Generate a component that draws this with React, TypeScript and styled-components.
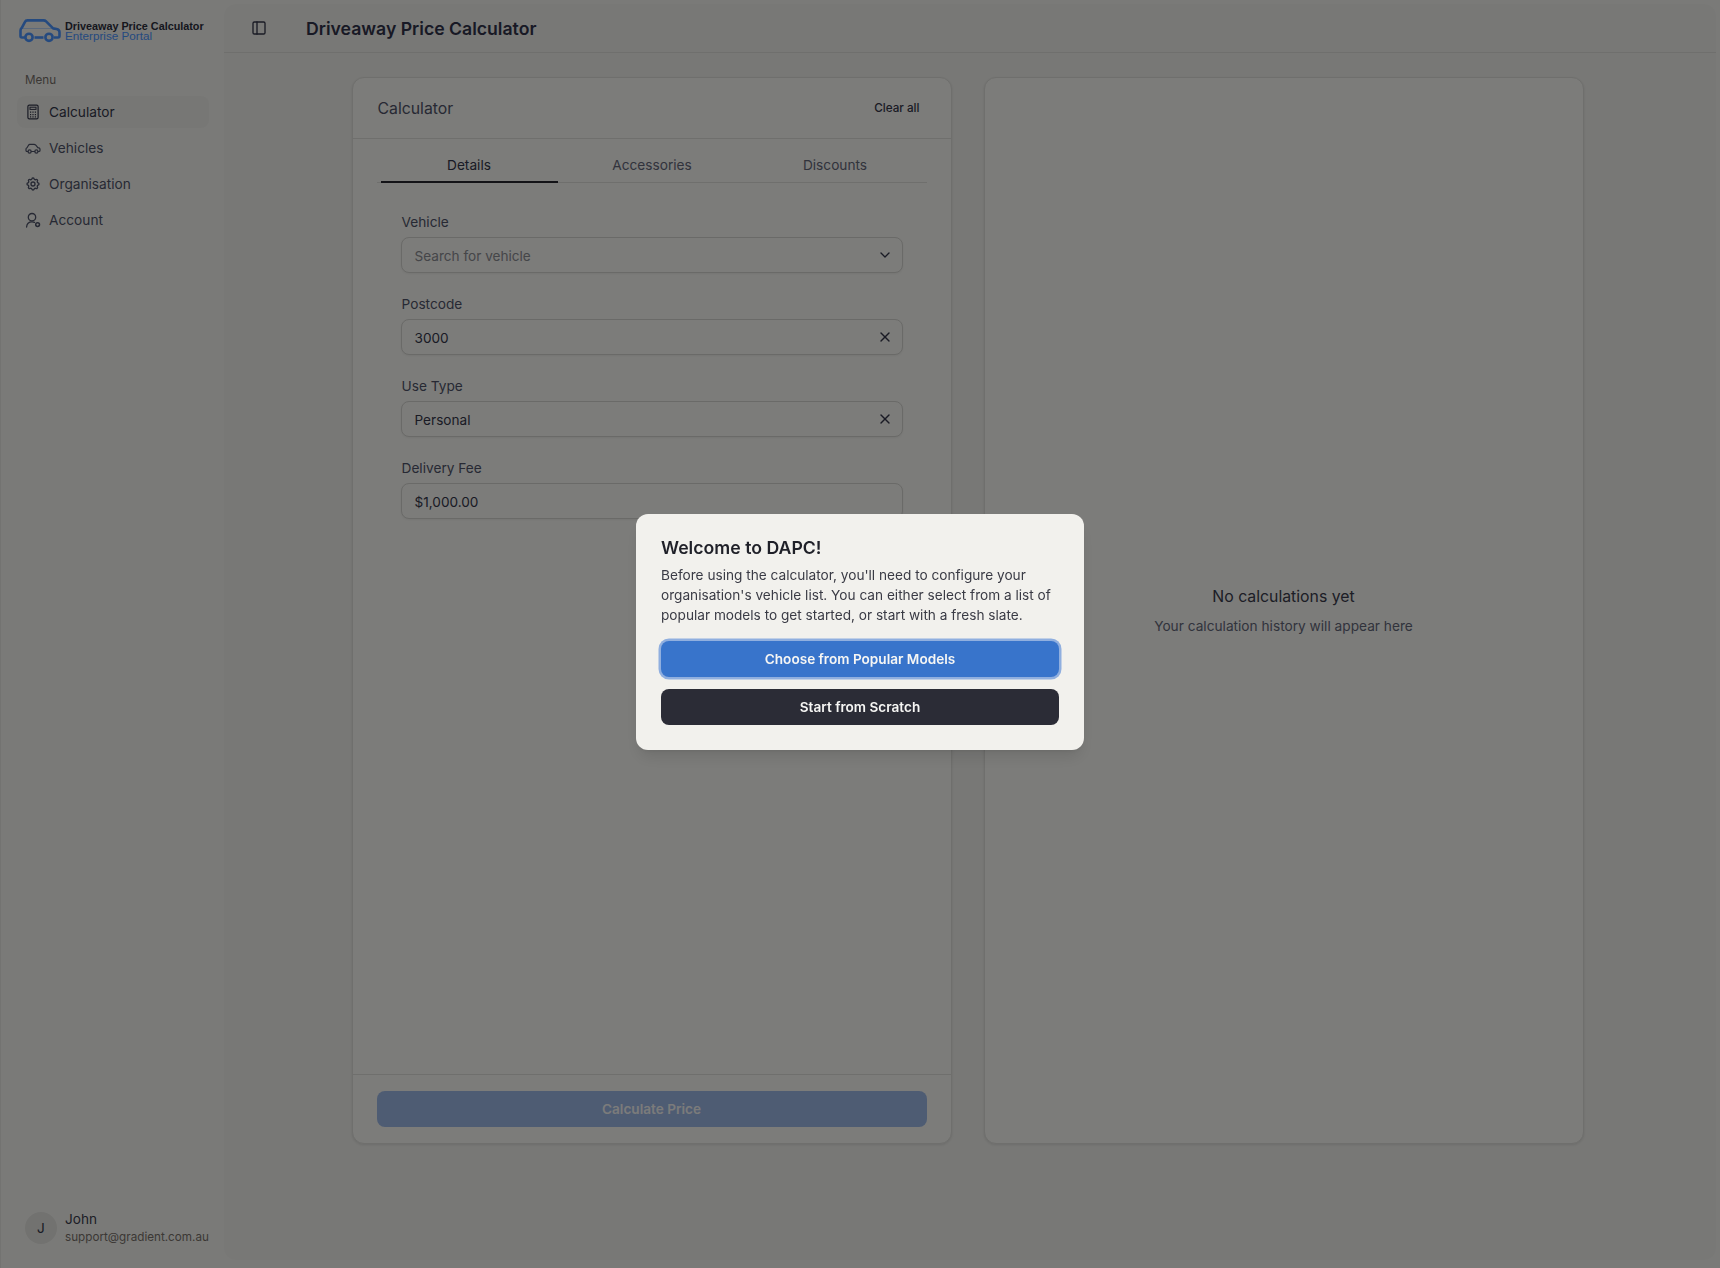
import * as React from 'react';
import styled, { createGlobalStyle } from 'styled-components';
import { ChevronDown, PanelLeft, X } from 'lucide-react';
import { TbSettings } from 'react-icons/tb';

const GlobalStyle = createGlobalStyle`
	* {
		box-sizing: border-box;
	}

	html, body {
		margin: 0;
		padding: 0;
		height: 100%;
		background: #f5f5f1;
		font-family: Inter, "Liberation Sans", sans-serif;
		color: #34374a;
	}
`;

const Layout = styled.div`
	display: flex;
	width: 100%;
	height: 1268px;
	overflow: hidden;
`;

const Sidebar = styled.aside`
	width: 224px;
	flex-shrink: 0;
	display: flex;
	flex-direction: column;
	padding: 15px 15px 16px 16px;
	border-left: 1px solid #e6e6e2;
`;

const Brand = styled.div`
	display: flex;
	align-items: center;
	gap: 4px;
	padding-left: 2px;
	height: 32px;
`;

const BrandText = styled.div`
	font-family: "Liberation Sans", Arial, sans-serif;
	line-height: 10px;
	white-space: nowrap;
`;

const BrandName = styled.div`
	font-size: 10.8px;
	font-weight: 700;
	color: #2c2e3c;
`;

const BrandSub = styled.div`
	font-size: 11.7px;
	color: #4a94ff;
`;

const MenuLabel = styled.div`
	font-size: 11.7px;
	line-height: 16px;
	margin-top: 25px;
	padding-left: 8px;
	color: #77706a;
`;

const Nav = styled.nav`
	display: flex;
	flex-direction: column;
	gap: 4px;
	margin-top: 8px;
`;

const NavItem = styled.div<{ $active?: boolean }>`
	display: flex;
	align-items: center;
	gap: 8px;
	height: 32px;
	padding: 0 8px;
	width: 192px;
	border-radius: 8px;
	font-size: 13.7px;
	color: ${(props) => (props.$active ? '#34374a' : '#4e5368')};
	background: ${(props) => (props.$active ? '#efefeb' : 'transparent')};
`;

const SideFooter = styled.div`
	margin-top: auto;
	display: flex;
	align-items: center;
	gap: 8px;
	padding: 0 0 6px 8px;
`;

const Avatar = styled.div`
	width: 32px;
	height: 32px;
	flex-shrink: 0;
	border-radius: 50%;
	display: flex;
	align-items: center;
	justify-content: center;
	background: #e4e4e0;
	font-size: 13.6px;
`;

const UserName = styled.div`
	font-size: 13.6px;
	line-height: 18px;
	color: #3a3c4c;
`;

const UserMail = styled.div`
	font-size: 11.7px;
	line-height: 18px;
	color: #77706a;
	white-space: nowrap;
`;

const Main = styled.main`
	flex: 1;
	min-width: 0;
	margin: 4px 4px 8px 0;
	border-radius: 12px;
	background: #f1f1ed;
	display: flex;
	flex-direction: column;
`;

const TopBar = styled.header`
	height: 49px;
	flex-shrink: 0;
	display: flex;
	align-items: center;
	gap: 39px;
	padding-left: 27px;
	border-bottom: 1px solid #dededa;
`;

const PageTitle = styled.h1`
	margin: 0;
	font-size: 17.65px;
	font-weight: 600;
	color: #30334a;
`;

const Columns = styled.div`
	display: flex;
	justify-content: center;
	gap: 32px;
	padding: 24px 5px 0 0;
	height: 1116px;
`;

const Card = styled.section`
	width: 600px;
	height: 1067px;
	display: flex;
	flex-direction: column;
	background: #f8f8f4;
	border: 1px solid #dededa;
	border-radius: 12px;
	box-shadow: 0 1px 3px rgba(0, 0, 0, 0.1);
`;

const CardHead = styled.div`
	height: 61px;
	flex-shrink: 0;
	display: flex;
	align-items: center;
	justify-content: space-between;
	padding: 0 31px 0 25px;
	border-bottom: 1px solid #dededa;
`;

const CardTitle = styled.div`
	font-size: 15.8px;
	color: #4e5368;
`;

const ClearLink = styled.div`
	font-size: 11.7px;
	font-weight: 500;
	margin-top: -1px;
	color: #34374a;
`;

const Tabs = styled.div`
	display: flex;
	margin: 8px 24px 0;
	padding-left: 1px;
	border-bottom: 1px solid #dededa;
`;

const Tab = styled.div<{ $active?: boolean }>`
	flex: 1;
	height: 36px;
	padding-top: 2px;
	display: flex;
	align-items: center;
	justify-content: center;
	font-size: 13.7px;
	margin: 0 3px -1px;
	color: ${(props) => (props.$active ? '#34374a' : '#636779')};
	border-bottom: 2px solid ${(props) => (props.$active ? '#26272f' : 'transparent')};
`;

const Fields = styled.div`
	flex: 1;
	display: flex;
	flex-direction: column;
	gap: 21px;
	padding: 29px 48px 0;
`;

const Field = styled.div`
	display: flex;
	flex-direction: column;
	gap: 5px;
`;

const Label = styled.div`
	font-size: 13.7px;
	line-height: 20px;
	padding-left: 1px;
	color: #4e5368;
`;

const InputBox = styled.div`
	height: 36px;
	display: flex;
	align-items: center;
	justify-content: space-between;
	padding: 0 9px 0 13px;
	background: #f8f8f4;
	border: 1px solid #d4d4d0;
	border-radius: 8px;
	box-shadow: 0 1px 2px rgba(0, 0, 0, 0.05);
	color: #34374a;
`;

const InputText = styled.div<{ $placeholder?: boolean }>`
	font-size: 13.6px;
	padding-top: 1px;
	color: ${(props) => (props.$placeholder ? '#8b8c92' : '#34374a')};
`;

const CardFoot = styled.div`
	padding: 16px 24px;
	border-top: 1px solid #dededa;
`;

const SubmitButton = styled.div`
	height: 36px;
	display: flex;
	align-items: center;
	justify-content: center;
	border-radius: 8px;
	background: #9cb8e6;
	color: #f6f6f6;
	font-size: 13.6px;
	font-weight: 600;
`;

const EmptyState = styled.div`
	flex: 1;
	display: flex;
	flex-direction: column;
	align-items: center;
	justify-content: center;
	gap: 7px;
`;

const EmptyTitle = styled.div`
	font-size: 15.8px;
	line-height: 24px;
	color: #3a3c4c;
`;

const EmptyText = styled.div`
	font-size: 13.7px;
	line-height: 20px;
	color: #636779;
`;

const Overlay = styled.div`
	position: fixed;
	inset: 0;
	display: flex;
	align-items: center;
	justify-content: center;
	padding-bottom: 4px;
	background: rgba(0, 0, 0, 0.5);
`;

const Modal = styled.div`
	width: 448px;
	padding: 22px 25px 25px;
	background: #f2f1ed;
	border-radius: 12px;
	box-shadow: 0 10px 15px -3px rgba(0, 0, 0, 0.1), 0 4px 6px -4px rgba(0, 0, 0, 0.1);
`;

const ModalTitle = styled.h2`
	margin: 0 0 5px;
	font-size: 17.7px;
	line-height: 24px;
	font-weight: 600;
	color: #1f2028;
`;

const ModalText = styled.p`
	margin: 0 0 16px;
	font-size: 13.65px;
	line-height: 20px;
	color: #3a3b45;
`;

const ModalActions = styled.div`
	display: flex;
	flex-direction: column;
	gap: 12px;
`;

const ModalButton = styled.div<{ $primary?: boolean }>`
	height: 36px;
	display: flex;
	align-items: center;
	justify-content: center;
	border-radius: 8px;
	color: #f6f6f4;
	font-size: 13.6px;
	font-weight: 600;
	background: ${(props) => (props.$primary ? '#3874cb' : '#2b2c36')};
	box-shadow: ${(props) => (props.$primary ? '0 0 0 2.5px #90afdf' : 'none')};
`;

const LogoCar = () => (
	<svg width="42" height="24" viewBox="0 0 42 24" fill="none" stroke="#4a94ff" strokeWidth="2.6" strokeLinejoin="round">
		<path d="M6 18.5H3a1.5 1.5 0 0 1-1.5-1.5V11.5C1.5 10.5 2 9.5 2.8 8.8L6 2.8C6.5 1.8 7.4 1.4 8.4 1.4H24.5c1 0 1.9.3 2.6 1l7 7 3.5.6c1.7.3 2.9 1.6 2.9 3.2V17a1.5 1.5 0 0 1-1.5 1.5H35" />
		<path d="M15.5 18.5h9" />
		<path d="M3 9.5H34" strokeWidth="1" opacity="0.35" />
		<circle cx="10" cy="18.3" r="3.6" />
		<circle cx="30" cy="18.3" r="3.6" />
	</svg>
);

const CalculatorIcon = () => (
	<svg width="16" height="16" viewBox="0 0 16 16" fill="none" stroke="currentColor" strokeWidth="1.2">
		<rect x="2.9" y="1.1" width="10.2" height="13.8" rx="1.4" />
		<rect x="5" y="3.2" width="6" height="2.2" strokeWidth="1" />
		<path
			d="M5 7.6h1.2v1.2H5zM7.4 7.6h1.2v1.2H7.4zM9.8 7.6H11v1.2H9.8zM5 10h1.2v1.2H5zM7.4 10h1.2v1.2H7.4zM9.8 10H11v1.2H9.8zM5 12.2h1.2v1.2H5zM7.4 12.2h1.2v1.2H7.4zM9.8 12.2H11v1.2H9.8z"
			fill="currentColor"
			stroke="none"
		/>
	</svg>
);

const VehicleIcon = () => (
	<svg width="16" height="16" viewBox="0 0 16 16" fill="none" stroke="currentColor" strokeWidth="1.2" strokeLinecap="round" strokeLinejoin="round">
		<path d="M3 11.5H2a1 1 0 0 1-1-1V9c0-.6.4-1 1-1.2L3.5 5.2c.3-.5.8-.8 1.4-.8H9c.7 0 1.3.3 1.8.8l2 2.4 1.2.3c.6.2 1 .7 1 1.3v1.3a1 1 0 0 1-1 1h-1" />
		<path d="M6.2 11.5h3.6" />
		<circle cx="4.6" cy="11.5" r="1.6" />
		<circle cx="11.4" cy="11.5" r="1.6" />
	</svg>
);

const AccountIcon = () => (
	<svg width="16" height="16" viewBox="0 0 16 16" fill="none" stroke="currentColor" strokeWidth="1.3" strokeLinecap="round">
		<circle cx="7" cy="5.2" r="3.7" />
		<path d="M1.6 15c.2-3 2.4-5.2 5.4-5.2 1 0 1.8.2 2.5.6" />
		<circle cx="12.6" cy="12.6" r="1.9" strokeWidth="1.5" />
	</svg>
);

const navItems = [
	{ label: 'Calculator', icon: <CalculatorIcon />, active: true },
	{ label: 'Vehicles', icon: <VehicleIcon /> },
	{ label: 'Organisation', icon: <TbSettings size={16} /> },
	{ label: 'Account', icon: <AccountIcon /> },
];

const fields = [
	{ label: 'Vehicle', value: 'Search for vehicle', placeholder: true, icon: ChevronDown },
	{ label: 'Postcode', value: '3000', icon: X },
	{ label: 'Use Type', value: 'Personal', icon: X },
	{ label: 'Delivery Fee', value: '$1,000.00' },
];

export default function App() {
	return (
		<>
			<GlobalStyle />
			<Layout>
				<Sidebar>
					<Brand>
						<LogoCar />
						<BrandText>
							<BrandName>Driveaway Price Calculator</BrandName>
							<BrandSub>Enterprise Portal</BrandSub>
						</BrandText>
					</Brand>
					<MenuLabel>Menu</MenuLabel>
					<Nav>
						{navItems.map((item) => (
							<NavItem key={item.label} $active={item.active}>
								{item.icon}
								{item.label}
							</NavItem>
						))}
					</Nav>
					<SideFooter>
						<Avatar>J</Avatar>
						<div>
							<UserName>John</UserName>
							<UserMail>support@gradient.com.au</UserMail>
						</div>
					</SideFooter>
				</Sidebar>
				<Main>
					<TopBar>
						<PanelLeft size={16} strokeWidth={2} />
						<PageTitle>Driveaway Price Calculator</PageTitle>
					</TopBar>
					<Columns>
						<Card>
							<CardHead>
								<CardTitle>Calculator</CardTitle>
								<ClearLink>Clear all</ClearLink>
							</CardHead>
							<Tabs>
								<Tab $active>Details</Tab>
								<Tab>Accessories</Tab>
								<Tab>Discounts</Tab>
							</Tabs>
							<Fields>
								{fields.map((field) => (
									<Field key={field.label}>
										<Label>{field.label}</Label>
										<InputBox>
											<InputText $placeholder={field.placeholder}>{field.value}</InputText>
											{field.icon && <field.icon size={16} />}
										</InputBox>
									</Field>
								))}
							</Fields>
							<CardFoot>
								<SubmitButton>Calculate Price</SubmitButton>
							</CardFoot>
						</Card>
						<Card>
							<EmptyState>
								<EmptyTitle>No calculations yet</EmptyTitle>
								<EmptyText>Your calculation history will appear here</EmptyText>
							</EmptyState>
						</Card>
					</Columns>
				</Main>
			</Layout>
			<Overlay>
				<Modal>
					<ModalTitle>Welcome to DAPC!</ModalTitle>
					<ModalText>
						Before using the calculator, you'll need to configure your organisation's vehicle list. You can either select from a list of popular models to get started, or start with a fresh slate.
					</ModalText>
					<ModalActions>
						<ModalButton $primary>Choose from Popular Models</ModalButton>
						<ModalButton>Start from Scratch</ModalButton>
					</ModalActions>
				</Modal>
			</Overlay>
		</>
	);
}
